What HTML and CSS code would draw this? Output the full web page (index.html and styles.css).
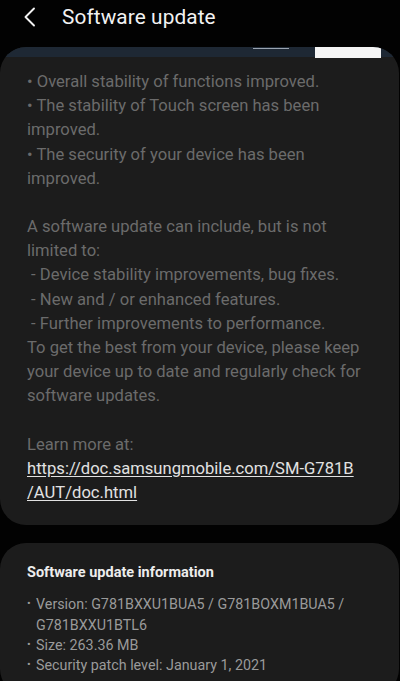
FILE: index.html
```html
<!DOCTYPE html>
<html>
<head>
<meta charset="utf-8">
<link rel="stylesheet" href="styles.css">
</head>
<body>
<div class="screen">
  <header class="topbar">
    <svg class="back" width="14" height="20" viewBox="0 0 14 20"><path d="M11 1.5 L2.5 10 L11 18.5" fill="none" stroke="#f2f2f2" stroke-width="1.9" stroke-linecap="round" stroke-linejoin="round"/></svg>
    <h1 class="title">Software update</h1>
  </header>

  <section class="card notes">
    <div class="peek">
      <span class="peek-line"></span>
      <span class="peek-box"></span>
    </div>
    <div class="notes-body">
      <p>• Overall stability of functions improved.<br>• The stability of Touch screen has been improved.<br>• The security of your device has been improved.</p>
      <p>A software update can include, but is not limited to:<br>&nbsp;- Device stability improvements, bug fixes.<br>&nbsp;- New and / or enhanced features.<br>&nbsp;- Further improvements to performance.<br>To get the best from your device, please keep your device up to date and regularly check for software updates.</p>
      <p>Learn more at:<br><a class="link" href="#">https://doc.samsungmobile.com/SM-G781B<br>/AUT/doc.html</a></p>
    </div>
  </section>

  <section class="card info">
    <h2 class="info-title">Software update information</h2>
    <ul class="info-list">
      <li>Version: G781BXXU1BUA5 / G781BOXM1BUA5 / G781BXXU1BTL6</li>
      <li>Size: 263.36 MB</li>
      <li>Security patch level: January 1, 2021</li>
    </ul>
  </section>
</div>
</body>
</html>
```

FILE: styles.css
```css
html, body {
  margin: 0;
  padding: 0;
  background: #020202;
}
body {
  font-family: Roboto, "Noto Sans", sans-serif;
  width: 400px;
  height: 681px;
  overflow: hidden;
}
.screen {
  display: flex;
  flex-direction: column;
}
.topbar {
  height: 47px;
  display: flex;
  align-items: flex-start;
  padding-top: 7px;
  box-sizing: border-box;
}
.back {
  margin-left: 23px;
  flex: none;
}
.title {
  margin: 0 0 0 25px;
  font-size: 20.8px;
  font-weight: 400;
  color: #f2f2f2;
  line-height: 20px;
  letter-spacing: 0.1px;
}
.card {
  background: #1c1c1c;
  border-radius: 26px;
  overflow: hidden;
  margin: 0 1px 0 0;
}
.peek {
  height: 10px;
  background: #1e2834;
  display: flex;
  align-items: flex-start;
}
.peek-line {
  width: 36px;
  height: 1px;
  background: #9aa3b0;
  margin-left: 253px;
  margin-top: 1px;
}
.peek-box {
  width: 66px;
  height: 11px;
  background: #f4f4f4;
  margin-left: 26px;
}
.notes-body {
  padding: 13px 24px 20px 27px;
  color: #6b6b6b;
  font-size: 16.6px;
  line-height: 24.2px;
}
.notes-body p {
  margin: 0 0 24px 0;
}
.notes-body p:last-child {
  margin-bottom: 0;
}
.link {
  color: #e2e2e2;
  text-decoration: underline;
  text-underline-offset: 2px;
}
.info {
  margin-top: 18px;
  padding: 20px 20px 20px 27px;
}
.info-title {
  margin: 0 0 11px 0;
  font-size: 14.5px;
  line-height: 20px;
  font-weight: 700;
  color: #ededed;
}
.info-list {
  list-style: none;
  margin: 0;
  padding: 0;
  color: #9a9a9a;
  font-size: 14.3px;
  line-height: 20.3px;
}
.info-list li {
  position: relative;
  padding-left: 9px;
}
.info-list li::before {
  content: "•";
  position: absolute;
  left: 0;
  top: 0;
  font-size: 11px;
}
```
